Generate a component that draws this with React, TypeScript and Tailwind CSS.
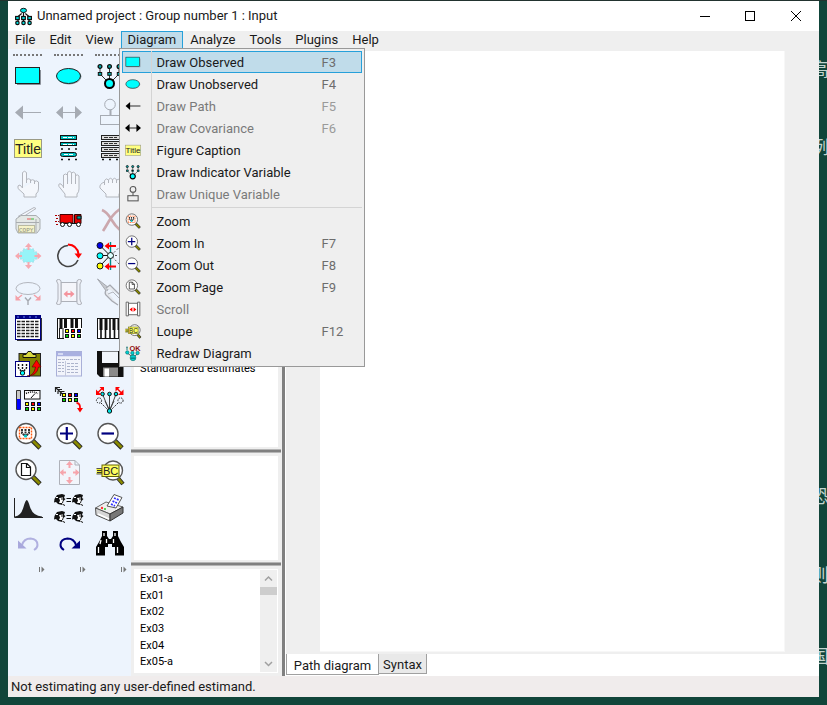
import React from 'react';

type IconProps = { className?: string };
type IconType = React.FC<IconProps>;

const Svg: React.FC<IconProps & { children: React.ReactNode }> = ({ className = 'w-7 h-7', children }) => (
    <svg viewBox="0 0 28 28" className={`${className} overflow-visible`} fill="none" aria-hidden="true">
        {children}
    </svg>
);

const ObservedIcon: IconType = (p) => (
    <Svg {...p}>
        <path d="M3 22.5H26.5V8" stroke="#8a9099" />
        <rect x="1.5" y="5.5" width="24" height="16" fill="#00ffff" stroke="#222" />
    </Svg>
);

const UnobservedIcon: IconType = (p) => (
    <Svg {...p}>
        <ellipse cx="14" cy="14.5" rx="12" ry="7.5" stroke="#8a9099" />
        <ellipse cx="13.5" cy="14" rx="12" ry="7.5" fill="#00ffff" stroke="#222" />
    </Svg>
);

const IndicatorIcon: IconType = (p) => (
    <Svg {...p}>
        <path d="M4 4V12L11 19M13.5 4V18M23 4V12L16 19" stroke="#333" />
        {[4, 13.5, 23].map((x) => (
            <g key={x} stroke="#111">
                <circle cx={x} cy="4.5" r="1.9" fill="#0aa" strokeWidth="1.3" />
                <rect x={x - 1.7} y="10.5" width="3.4" height="2.8" fill="#0aa" />
            </g>
        ))}
        <circle cx="13.5" cy="21.5" r="4.5" fill="#00ffff" stroke="#000" strokeWidth="2" />
    </Svg>
);

const PathIcon: IconType = (p) => (
    <Svg {...p}>
        <path d="M8 14.5H27" stroke="#a6abb3" />
        <path d="M1 14.5L9 7.5V21.5Z" fill="#a6abb3" />
    </Svg>
);

const CovarianceIcon: IconType = (p) => (
    <Svg {...p}>
        <path d="M7 14.5H20" stroke="#a6abb3" />
        <path d="M1 14.5L8 8V21ZM27 14.5L20 8V21Z" fill="#a6abb3" />
    </Svg>
);

const UniqueIcon: IconType = (p) => (
    <Svg {...p}>
        <g stroke="#a6abb3">
            <circle cx="14" cy="6.5" r="5.3" />
            <path d="M14.5 12V17" strokeWidth="2" />
            <rect x="4.5" y="17.5" width="20" height="9" />
        </g>
    </Svg>
);

const TitleIcon: IconType = (p) => (
    <Svg {...p}>
        <rect x="0.5" y="5.5" width="27" height="18" fill="#ffff80" stroke="#9a9a86" />
        <text x="1" y="20" fontSize="14" fill="#222" fontFamily="Liberation Sans, sans-serif">Title</text>
    </Svg>
);

const VariablesModelIcon: IconType = (p) => (
    <Svg {...p}>
        <g stroke="#111">
            <rect x="5.5" y="1.5" width="16" height="4" fill="#0bb" />
            <rect x="5.5" y="8.5" width="16" height="3" fill="#0bb" />
            <rect x="5.5" y="18.5" width="16" height="4" rx="2" fill="#0bb" />
            <path d="M8 3.5H19M8 10.5H19M9 20.5H18" stroke="#fff" strokeDasharray="4 1" />
            <path d="M6 15H22M6 25.5H22" strokeWidth="1.6" strokeDasharray="2 5" />
        </g>
    </Svg>
);

const VariablesDataIcon: IconType = (p) => (
    <Svg {...p}>
        {[1.5, 7.5, 13.5, 19.5].map((y) => (
            <g key={y}>
                <rect x="5.5" y={y} width="18" height="4" fill="#ddd" stroke="#222" />
                <path d={`M8 ${y + 2}H21`} stroke="#333" strokeDasharray="4 1" />
            </g>
        ))}
        <path d="M6 25.5H24" stroke="#111" strokeWidth="1.6" strokeDasharray="2 5" />
    </Svg>
);

const SelectOneIcon: IconType = (p) => (
    <Svg {...p}>
        <path
            d="M8.5 18V2.5Q10.5 0 12.5 2.5V11.5M12.5 13V9.5Q14.5 8 16.5 9.5V13M16.5 10.5Q18.5 9 20.5 10.5V14M20.5 11.5Q22.5 10 24.5 12V19Q24.5 22 22 24V27H10V24L4 18.5Q3 15 6 15L8.5 18"
            fill="#f4f7fc" stroke="#b3b6bd"
        />
    </Svg>
);

const SelectAllIcon: IconType = (p) => (
    <Svg {...p}>
        <path
            d="M8.5 18V5Q10.5 3 12.5 5V14M12.5 5V2.5Q14.5 0 16.5 2.5V14M16.5 3Q18.5 1 20.5 3.5V14M20.5 5.5Q22.5 4 24 6V19Q24 22 22 24V27H10V24L4 16.5Q3 13 6 14L8.5 17"
            fill="#f4f7fc" stroke="#b3b6bd"
        />
    </Svg>
);

const DeselectIcon: IconType = (p) => (
    <Svg {...p}>
        <path
            d="M8.5 15V10.5Q10.5 7.5 12.5 10V13M12.5 9.5Q14.5 7 16.5 9.5V13M16.5 9.5Q18.5 7 20.5 9.5V13M20.5 10Q23 8 25 11V19Q25 22 23 24V27H10V24L4 18Q3 14 8.5 12"
            fill="#f4f7fc" stroke="#b3b6bd"
        />
    </Svg>
);

const DuplicateIcon: IconType = (p) => (
    <Svg {...p}>
        <path d="M4 10.5L20 1.5L22 2.5L8 11.5" stroke="#b3b6bd" fill="#f4f7fc" />
        <path d="M2 13L7 9.5H22L26 13V23L23 27H4L2 23Z" fill="#e4e8e6" stroke="#a9adb0" />
        <path d="M2 16.5H25M22 13V26" stroke="#a9adb0" />
        <path d="M13 13H18" stroke="#e8a0a0" strokeWidth="2" />
        <path d="M17 13H20" stroke="#90d090" strokeWidth="2" />
        <rect x="4.5" y="19.5" width="16" height="7" fill="#f5f3c8" stroke="#b9b9a0" />
        <text x="5" y="26" fontSize="6" fill="#8f8f80" fontFamily="Liberation Mono, monospace">COPY</text>
    </Svg>
);

const TruckIcon: IconType = (p) => (
    <Svg {...p}>
        <path d="M0 9.5H4M1 12.5H4M0 15.5H4M1 18.5H4" stroke="#a00" strokeDasharray="2 1" />
        <path d="M5 8.5H18V17H5Z" fill="#f00000" stroke="#400" />
        <path d="M19.5 8.5H26V17.5H19.5Z" fill="#e00000" stroke="#300" />
        <path d="M22 10H26V13H22Z" fill="#00a0a0" stroke="#111" />
        <path d="M5 17.5H26" stroke="#111" />
        {[7.5, 14.5, 23.5].map((x) => (
            <circle key={x} cx={x} cy="18.5" r="2" fill="#fff" stroke="#111" />
        ))}
    </Svg>
);

const EraseIcon: IconType = (p) => (
    <Svg {...p}>
        <path d="M6 4Q11 6 15 13T25 25M24 3Q17 8 13 15T7 25" stroke="#cba7ad" strokeWidth="2.6" />
    </Svg>
);

const ShapeIcon: IconType = (p) => (
    <Svg {...p}>
        <path d="M9 7H20V10H23V17H20V20H9V17H6V10H9Z" fill="#96f4f8" stroke="#a5dfe8" strokeDasharray="2 1" />
        <path d="M14.5 1L18 5H15.5V8H13.5V5H11ZM14.5 27L18 23H15.5V20H13.5V23H11ZM1 14L5 10.5V13H8V15H5V17.5ZM27.5 14L23.5 10.5V13H20.5V15H23.5V17.5Z" fill="#f6a8b0" />
    </Svg>
);

const RotateIcon: IconType = (p) => (
    <Svg {...p}>
        <path d="M13 3.5A10.5 10.5 0 1 0 23 18" stroke="#444" strokeWidth="1.6" />
        <path d="M13 2.5Q22 3 23.5 12" stroke="#f00" strokeWidth="2" />
        <path d="M19.5 11.5H27L23.5 16.5Z" fill="#f00" />
    </Svg>
);

const ReflectIcon: IconType = (p) => (
    <Svg {...p}>
        <path d="M4 3.5L14 13.5L4 24M4 13.5H14" stroke="#111" />
        <path d="M25 3.5L15 13.5L25 24M15 13.5H25" stroke="#555" strokeDasharray="2 2" />
        <path d="M14.5 0V28" stroke="#088" strokeWidth="1.4" />
        <circle cx="4" cy="3.5" r="3" fill="#0000f0" stroke="#111" />
        <circle cx="4" cy="13.8" r="3" fill="#00ffff" stroke="#111" />
        <circle cx="4" cy="24" r="3" fill="#ffff00" stroke="#111" />
        <circle cx="14.5" cy="13.5" r="3" fill="#dff" stroke="#111" />
        <path d="M12 4H20M12 24.5H20" stroke="#f00" strokeWidth="2" />
        <path d="M8.5 4L13 0.5V7.5ZM8.5 24.5L13 21V28Z" fill="#f00" />
    </Svg>
);

const MoveParametersIcon: IconType = (p) => (
    <Svg {...p}>
        <ellipse cx="14" cy="10.5" rx="12" ry="6" stroke="#b3b6bd" />
        <path d="M11 19.5L14 23L17 19.5M14 23V27" stroke="#a6a9b0" strokeWidth="1.4" />
        <path d="M8 17L3 21M20 17L25 21" stroke="#f4a0a8" strokeWidth="1.5" />
        <path d="M1.5 17V22.5H7ZM26.5 17V22.5H21Z" fill="#f4a0a8" />
    </Svg>
);

const ScrollIcon: IconType = (p) => (
    <Svg {...p}>
        <path d="M6 4.5H22V23.5H6Z" fill="#f4f5fa" stroke="#aeb1b9" />
        <path d="M1.5 3Q1.5 1.5 3.5 1.5T6 3V25Q6 26.5 3.5 26.5T1.5 25Q3 23 3 21V6ZM26.5 3Q26.5 1.5 24.5 1.5T22 3V25Q22 26.5 24.5 26.5T26.5 25Q25 23 25 21V6Z" fill="#eef1f8" stroke="#aeb1b9" />
        <path d="M11 16H17" stroke="#f4939c" strokeWidth="2" />
        <path d="M8.5 16L12.5 12.5V19.5ZM19.5 16L15.5 12.5V19.5Z" fill="#f4939c" />
    </Svg>
);

const TouchUpIcon: IconType = (p) => (
    <Svg {...p}>
        <path d="M1.5 1L13 10L10.5 13.5Z" fill="#c5c8cd" stroke="#a6a9b0" />
        <path d="M10 10L14 7L24 17M10 12Q8 16 11 18L16 23L22 27" fill="#e6e9ee" stroke="#a6a9b0" strokeWidth="1.3" />
        <path d="M12 16L17 14L23 20" stroke="#b3b6bd" />
    </Svg>
);

const DataFilesIcon: IconType = (p) => (
    <Svg {...p}>
        <rect x="1.5" y="1.5" width="25" height="24" fill="#fff" stroke="#000080" />
        <path d="M1 3.5H27" stroke="#000080" strokeWidth="3" />
        <path d="M3 3H25" stroke="#6080ff" strokeDasharray="2 4" />
        <path d="M3 7.5H25M3 10.5H25M3 13.5H25M3 16.5H25M3 19.5H25M3 22.5H25" stroke="#222" strokeWidth="1.4" strokeDasharray="3.5 1" />
        <path d="M27.5 4V26.5H3" stroke="#333" />
    </Svg>
);

const Swatches: React.FC<{ x: number; y: number }> = ({ x, y }) => (
    <g>
        {['#ffff00', '#ff0000', '#0000ff', '#00d000', '#ffff00', '#00d000'].map((fill, i) => (
            <rect key={i} x={x + (i % 3) * 6 + 0.5} y={y + Math.floor(i / 3) * 5 + 0.5} width="3" height="3" fill={fill} stroke="#111" />
        ))}
    </g>
);

const AnalysisPropertiesIcon: IconType = (p) => (
    <Svg {...p}>
        <rect x="2.5" y="4.5" width="24" height="20" fill="#fff" stroke="#111" />
        <path d="M6 4V15M10.5 4V15M17 4V15M21.5 4V15" stroke="#111" strokeWidth="3" />
        <path d="M4.5 14V24M8 14V24" stroke="#222" />
        <rect x="9" y="14" width="18" height="11" fill="#fff" />
        <Swatches x={10} y={15} />
    </Svg>
);

const CalculateIcon: IconType = (p) => (
    <Svg {...p}>
        <rect x="1.5" y="4.5" width="26" height="20" fill="#fff" stroke="#111" />
        <path d="M5 4V16M10 4V16M18 4V16M23 4V16" stroke="#111" strokeWidth="3" />
        <path d="M5 16V24M9.5 16V24M14 4V24M18.5 16V24M23 16V24" stroke="#111" strokeWidth="1.6" />
    </Svg>
);

const ClipboardIcon: IconType = (p) => (
    <Svg {...p}>
        <rect x="5" y="3.5" width="21.5" height="22.5" fill="#808000" stroke="#222" />
        <path d="M9 7.5V4.5H12L14 1.5H17L19 4.5H22V7.5Z" fill="#d8d840" stroke="#111" />
        <rect x="1.5" y="11.5" width="14" height="15" fill="#fff" stroke="#000080" />
        <path d="M4.5 14V18L8 22M8.5 14V21M12.5 14V18L9 22" stroke="#111" strokeDasharray="2 1" strokeWidth="1.4" />
        <circle cx="8.5" cy="23" r="2.2" fill="#00ffff" stroke="#111" />
        <path d="M13 26Q20 26 21.5 17H18L22.5 10L27 17H24.5Q23 26 13 26Z" fill="#ff0000" stroke="#500" strokeWidth="0.6" />
    </Svg>
);

const ViewTextIcon: IconType = (p) => (
    <Svg {...p}>
        <rect x="1.5" y="1.5" width="25" height="24.5" fill="#f2f4fb" stroke="#a9b0d8" />
        <path d="M1 4H27" stroke="#a9b0e0" strokeWidth="4.5" />
        <path d="M3 4H8" stroke="#e4e8fa" strokeWidth="1.5" />
        <path d="M3 9.5H25M3 12.5H9M3 15.5H9M3 18.5H9M3 21.5H9M12 13.5H24M12 16.5H24M12 19.5H24M12 22.5H24" stroke="#adb4cc" strokeDasharray="3 1" />
        <path d="M10.5 11V26" stroke="#c4c9dc" />
    </Svg>
);

const SaveIcon: IconType = (p) => (
    <Svg {...p}>
        <path d="M1 1H27.5V27H4L1 24Z" fill="#111" />
        <rect x="6" y="1.5" width="16" height="11.5" fill="#f2f6fc" />
        <rect x="24" y="3" width="2" height="2" fill="#fff" />
        <rect x="7" y="17.5" width="15" height="9" fill="#8a8a8a" />
        <rect x="8.5" y="18.5" width="4.5" height="8" fill="#fff" />
    </Svg>
);

const ObjectPropertiesIcon: IconType = (p) => (
    <Svg {...p}>
        <path d="M2.5 4.5H6.5V23.5H2.5Z" fill="#c8c8c8" stroke="#333" />
        <path d="M3 13H6.5V23.5H3Z" fill="#0000ff" />
        <rect x="10.5" y="4.5" width="15.5" height="8.5" fill="#fff" stroke="#111" />
        <path d="M12 7.5Q18 4.5 24 7.5" stroke="#111" strokeDasharray="1 1" strokeWidth="1.5" />
        <path d="M17 12L21 7.5" stroke="#111" />
        <Swatches x={11} y={16} />
    </Svg>
);

const DragPropertiesIcon: IconType = (p) => (
    <Svg {...p}>
        <path d="M0.5 6V1.5H5M3 8V3.5H7M5.5 10V5.5H9.5M0.5 1.5L8 8.5" stroke="#222" strokeWidth="1.2" />
        <Swatches x={7} y={7} />
        <path d="M21.5 17Q25.5 17 25 23" stroke="#f00" strokeWidth="1.8" />
        <path d="M22 22H28L25 26.5Z" fill="#f00" />
    </Svg>
);

const PreserveSymmetriesIcon: IconType = (p) => (
    <Svg {...p}>
        <path d="M6.5 8L13 24M13.5 8V24M20 8L14 24M9 15L13.5 24M18 15L13.5 24" stroke="#444" />
        <g fill="#00e0e0" stroke="#111">
            <circle cx="6.5" cy="8" r="1.8" />
            <circle cx="13.5" cy="8" r="1.8" />
            <circle cx="20" cy="8" r="1.8" />
            <circle cx="13.5" cy="25" r="2.2" />
        </g>
        <g stroke="#222" strokeDasharray="1.5 1">
            <circle cx="3" cy="14.5" r="2.6" />
            <circle cx="24.5" cy="14.5" r="2.6" />
            <path d="M5 17L12 24M22 17L15 24" />
        </g>
        <path d="M1.5 7L6 2.5M25.5 7L21 2.5" stroke="#f00" strokeWidth="1.4" />
        <path d="M0 3.5V9H5.5ZM3.5 1H8V5.5ZM27.5 3.5V9H22ZM24 1H19.5V5.5Z" fill="#f00" />
    </Svg>
);

const Glass: React.FC<IconProps & { children: React.ReactNode }> = ({ children, className }) => (
    <Svg className={className}>
        <path d="M18 18L26 26" stroke="#222" strokeWidth="4.6" />
        <path d="M18.8 18.8L25.6 25.6" stroke="#8a8a00" strokeWidth="2.8" />
        <circle cx="12" cy="11.5" r="10" fill="#fff" stroke="#555" strokeWidth="1.4" />
        {children}
    </Svg>
);

const ZoomAreaIcon: IconType = (p) => (
    <Glass {...p}>
        <rect x="5.5" y="5.5" width="12" height="11" stroke="#ff5a10" strokeWidth="1.4" strokeDasharray="2 1" />
        <path d="M8 7V11L11 14M11.5 7V14M15 7V11L12 14" stroke="#333" strokeWidth="2" strokeDasharray="2 0.6" />
        <circle cx="11.5" cy="14" r="1.6" fill="#0cc" />
    </Glass>
);

const ZoomInIcon: IconType = (p) => (
    <Glass {...p}>
        <path d="M5 11.5H18M11.8 5V18" stroke="#000080" strokeWidth="2.2" />
    </Glass>
);

const ZoomOutIcon: IconType = (p) => (
    <Glass {...p}>
        <path d="M5.5 11.5H18" stroke="#000080" strokeWidth="2.2" />
    </Glass>
);

const ZoomPageIcon: IconType = (p) => (
    <Glass {...p}>
        <path d="M7.5 5.5H13L16.5 9V17.5H7.5ZM12.5 5.5V9.5H16.5" stroke="#111" strokeWidth="1.2" />
    </Glass>
);

const ResizePageIcon: IconType = (p) => (
    <Svg {...p}>
        <path d="M4.5 2.5H20L24.5 7V26.5H4.5ZM20 2.5V7H24.5" fill="#f2f5fb" stroke="#aeb1b9" />
        <path d="M14.5 3L18 7H15.5V10H13.5V7H11ZM14.5 26L18 22H15.5V19H13.5V22H11ZM4.5 14.5L8.5 11V13.5H11V15.5H8.5V18ZM24.5 14.5L20.5 11V13.5H18V15.5H20.5V18Z" fill="#f6a5ac" />
    </Svg>
);

const LoupeIcon: IconType = (p) => (
    <Svg {...p}>
        <path d="M21 19L27 26" stroke="#222" strokeWidth="4.2" />
        <path d="M21.5 19.6L26.5 25.5" stroke="#8a8a00" strokeWidth="2.6" />
        <circle cx="17" cy="12.5" r="9.5" fill="#fff" stroke="#555" strokeWidth="1.4" />
        <path d="M0.5 10.5H6V16H0.5" fill="#f4f430" stroke="#555" />
        <path d="M1 12.5H6M1 14.5H6" stroke="#333" />
        <rect x="6" y="7" width="17" height="11.5" fill="#ffff60" stroke="#666600" />
        <text x="7" y="17" fontSize="11" fill="#222" fontFamily="Liberation Sans, sans-serif">BC</text>
    </Svg>
);

const BayesianIcon: IconType = (p) => (
    <Svg {...p}>
        <path d="M1 22.5Q7 22 9.5 13Q11.5 6 12.8 6Q14 6 16 13Q19 22 28 22.5V23H1Z" fill="#222" />
        <path d="M0.5 4V23.5H29" stroke="#222" />
    </Svg>
);

const Face: React.FC<{ x: number; y: number }> = ({ x, y }) => (
    <g transform={`translate(${x} ${y})`}>
        <path d="M0.5 5L3 1L8 0L11 1L10 4L11.5 5L9.5 7L8.5 11L4 10L2 8L0 8.5Z" fill="#111" />
        <path d="M5 4L9 3.5V6L8 9H5L6 6.5Z" fill="#fff" />
        <path d="M2 3.5H4M8 9.5L10.5 10.5" stroke="#fff" />
        <path d="M7 5H9M9 10.5L11 11.5" stroke="#111" />
    </g>
);

const MultipleGroupIcon: IconType = (p) => (
    <Svg {...p}>
        <Face x={-1} y={0} />
        <Face x={17} y={0} />
        <Face x={-1} y={17} />
        <Face x={17} y={17} />
        <path d="M11.5 4.5H16M11.5 7.5H16M11.5 21.5H16M11.5 24.5H16" stroke="#111" strokeWidth="1.2" />
    </Svg>
);

const PrintIcon: IconType = (p) => (
    <Svg {...p}>
        <path d="M-0.5 14L10 8L27 13L14 20Z" fill="#eee" stroke="#666" />
        <path d="M-0.5 14L14 20V27L0 21Z" fill="#d5d5d5" stroke="#555" />
        <path d="M14 20L27 13V19L14 27Z" fill="#777" stroke="#333" />
        <path d="M11 12L18 0.5L26 3.5L20 14Z" fill="#fff" stroke="#555" />
        <path d="M18 4L23 6M16.5 7L21 9M15 10L19 12" stroke="#3030ff" strokeWidth="1.8" strokeDasharray="2 1" />
        <path d="M2 20L13 25" stroke="#fff" strokeWidth="1.4" />
        <circle cx="6" cy="14" r="1.2" fill="#f33" />
        <circle cx="9" cy="15" r="1" fill="#2c2" />
    </Svg>
);

const UndoIcon: IconType = (p) => (
    <Svg {...p}>
        <path d="M8 15Q10 8.5 16.5 8.5Q23.5 9 23.5 15Q23.5 18 20 20" stroke="#b0b0e0" strokeWidth="2" />
        <path d="M4 10.5V18.5H12.5Z" fill="#a8a8dc" />
    </Svg>
);

const RedoIcon: IconType = (p) => (
    <Svg {...p}>
        <path d="M21 15Q19 8.5 12.5 8.5Q5.5 9 5.5 15Q5.5 18 9 20" stroke="#000080" strokeWidth="2" />
        <path d="M25 10.5V18.5H16.5Z" fill="#000080" />
    </Svg>
);

const SearchIcon: IconType = (p) => (
    <Svg {...p}>
        <path d="M6 1H11V6L13 9H15L17 6V1H22V6L25 12L28 17V25.5H19V17H16V14H12V17H9V25.5H0V17L3 12L6 6Z" fill="#000" />
        <path d="M8 3V6M19 3V6M2.5 17V23M10.5 9V13M17.5 9V13M21.5 17V23M5 10L4 14" stroke="#fff" strokeWidth="1.3" />
    </Svg>
);

const SmallPathIcon: IconType = (p) => (
    <Svg {...p}>
        <path d="M8 14H27" stroke="#333" strokeWidth="1.8" />
        <path d="M1 14L9 7V21Z" fill="#000" />
    </Svg>
);

const SmallCovarianceIcon: IconType = (p) => (
    <Svg {...p}>
        <path d="M7 14H21" stroke="#333" strokeWidth="1.8" />
        <path d="M0 14L8 7V21ZM28 14L20 7V21Z" fill="#000" />
    </Svg>
);

const SmallUniqueIcon: IconType = (p) => (
    <Svg {...p}>
        <g stroke="#555" strokeWidth="1.8">
            <circle cx="14" cy="6" r="5" />
            <path d="M14 11V17" />
            <rect x="5" y="17" width="18" height="9" />
        </g>
    </Svg>
);

const SmallScrollIcon: IconType = (p) => (
    <Svg {...p}>
        <path d="M6 4H22V24H6Z" fill="#fff" stroke="#555" strokeWidth="1.5" />
        <path d="M2 2H6V26H2ZM22 2H26V26H22Z" fill="#fff" stroke="#555" strokeWidth="1.5" />
        <path d="M8 15L13 11V19ZM20 15L15 11V19Z" fill="#f00" />
    </Svg>
);

const RedrawIcon: IconType = (p) => (
    <Svg {...p}>
        <path d="M4 14L12 20M14 13V20M24 14L16 20" stroke="#444" strokeWidth="1.5" />
        <g fill="#00d0d0" stroke="#066">
            <circle cx="4" cy="13" r="3" />
            <circle cx="13" cy="14" r="3" />
            <circle cx="22" cy="14" r="3" />
            <circle cx="14" cy="22.5" r="5" />
        </g>
        <path d="M10 23H18" stroke="#055" strokeWidth="1.5" />
        <path d="M2 4H5M2 7H5" stroke="#066" strokeWidth="2" />
        <text x="8" y="10" fontSize="13" fontWeight="bold" fill="#901010" fontFamily="Liberation Sans, sans-serif">OK</text>
    </Svg>
);

const AppIcon: IconType = (p) => (
    <Svg {...p}>
        <path d="M14 7V24M11 9L5 14V24M17 9L23 14V24" stroke="#111" strokeWidth="2" />
        <ellipse cx="14" cy="4" rx="5" ry="3.5" fill="#00e0e0" stroke="#111" strokeWidth="1.6" />
        {[4, 14, 24].map((x) => (
            <g key={x} fill="#00e0e0" stroke="#111" strokeWidth="2">
                <rect x={x - 3} y="14" width="6" height="5" />
                <circle cx={x} cy="24.5" r="2.8" />
            </g>
        ))}
    </Svg>
);

const tools: { label: string; Icon: IconType; disabled?: boolean }[] = [
    { label: 'Draw observed', Icon: ObservedIcon },
    { label: 'Draw unobserved', Icon: UnobservedIcon },
    { label: 'Draw indicator', Icon: IndicatorIcon },
    { label: 'Draw path', Icon: PathIcon, disabled: true },
    { label: 'Draw covariance', Icon: CovarianceIcon, disabled: true },
    { label: 'Draw unique', Icon: UniqueIcon, disabled: true },
    { label: 'Figure caption', Icon: TitleIcon },
    { label: 'Variables in model', Icon: VariablesModelIcon },
    { label: 'Variables in dataset', Icon: VariablesDataIcon },
    { label: 'Select one', Icon: SelectOneIcon, disabled: true },
    { label: 'Select all', Icon: SelectAllIcon, disabled: true },
    { label: 'Deselect all', Icon: DeselectIcon, disabled: true },
    { label: 'Duplicate', Icon: DuplicateIcon, disabled: true },
    { label: 'Move', Icon: TruckIcon },
    { label: 'Erase', Icon: EraseIcon, disabled: true },
    { label: 'Shape', Icon: ShapeIcon, disabled: true },
    { label: 'Rotate', Icon: RotateIcon },
    { label: 'Reflect', Icon: ReflectIcon },
    { label: 'Move parameters', Icon: MoveParametersIcon, disabled: true },
    { label: 'Scroll', Icon: ScrollIcon, disabled: true },
    { label: 'Touch up', Icon: TouchUpIcon, disabled: true },
    { label: 'Data files', Icon: DataFilesIcon },
    { label: 'Analysis properties', Icon: AnalysisPropertiesIcon },
    { label: 'Calculate', Icon: CalculateIcon },
    { label: 'Copy to clipboard', Icon: ClipboardIcon },
    { label: 'View text', Icon: ViewTextIcon, disabled: true },
    { label: 'Save', Icon: SaveIcon },
    { label: 'Object properties', Icon: ObjectPropertiesIcon },
    { label: 'Drag properties', Icon: DragPropertiesIcon },
    { label: 'Preserve symmetries', Icon: PreserveSymmetriesIcon },
    { label: 'Zoom', Icon: ZoomAreaIcon },
    { label: 'Zoom in', Icon: ZoomInIcon },
    { label: 'Zoom out', Icon: ZoomOutIcon },
    { label: 'Zoom page', Icon: ZoomPageIcon },
    { label: 'Resize page', Icon: ResizePageIcon, disabled: true },
    { label: 'Loupe', Icon: LoupeIcon },
    { label: 'Bayesian', Icon: BayesianIcon },
    { label: 'Multiple group', Icon: MultipleGroupIcon },
    { label: 'Print', Icon: PrintIcon },
    { label: 'Undo', Icon: UndoIcon, disabled: true },
    { label: 'Redo', Icon: RedoIcon },
    { label: 'Search', Icon: SearchIcon },
];

const menus = ['File', 'Edit', 'View', 'Diagram', 'Analyze', 'Tools', 'Plugins', 'Help'];

interface MenuEntry {
    label: string;
    Icon: IconType;
    hotkey?: string;
    disabled?: boolean;
    active?: boolean;
}

const drawEntries: MenuEntry[] = [
    { label: 'Draw Observed', Icon: ObservedIcon, hotkey: 'F3', active: true },
    { label: 'Draw Unobserved', Icon: UnobservedIcon, hotkey: 'F4' },
    { label: 'Draw Path', Icon: SmallPathIcon, hotkey: 'F5', disabled: true },
    { label: 'Draw Covariance', Icon: SmallCovarianceIcon, hotkey: 'F6', disabled: true },
    { label: 'Figure Caption', Icon: TitleIcon },
    { label: 'Draw Indicator Variable', Icon: IndicatorIcon },
    { label: 'Draw Unique Variable', Icon: SmallUniqueIcon, disabled: true },
];

const viewEntries: MenuEntry[] = [
    { label: 'Zoom', Icon: ZoomAreaIcon },
    { label: 'Zoom In', Icon: ZoomInIcon, hotkey: 'F7' },
    { label: 'Zoom Out', Icon: ZoomOutIcon, hotkey: 'F8' },
    { label: 'Zoom Page', Icon: ZoomPageIcon, hotkey: 'F9' },
    { label: 'Scroll', Icon: SmallScrollIcon, disabled: true },
    { label: 'Loupe', Icon: LoupeIcon, hotkey: 'F12' },
    { label: 'Redraw Diagram', Icon: RedrawIcon },
];

const MenuRow: React.FC<{ entry: MenuEntry }> = ({ entry }) => {
    const { label, Icon, hotkey, disabled, active } = entry;
    return (
        <button
            role="menuitem"
            disabled={disabled}
            className={`flex h-[22px] w-full text-left leading-6 ${active ? 'bg-[#c0dcea] ring-1 ring-[#26a0da] ring-inset' : ''} ${disabled ? 'text-[#7a7a7a]' : 'text-[#1a1a1a]'}`}
        >
            <span className="flex w-[29px] items-center self-stretch pl-[3px]"><Icon className="h-4 w-4" /></span>
            <span className="flex-1 border-l border-[#d4d4d4] pl-[5px]">{label}</span>
            <span className={`w-10 ${disabled ? 'text-[#9a9a9a]' : 'text-[#6d6d6d]'}`}>{hotkey}</span>
        </button>
    );
};

const DiagramMenu: React.FC = () => (
    <div role="menu" className="absolute top-[17px] -left-0.5 z-10 w-[246px] border border-[#999] bg-[#efefef] p-[2px]">
        {drawEntries.map((entry) => <MenuRow key={entry.label} entry={entry} />)}
        <div className="ml-[29px] h-[5px] border-l border-[#d4d4d4] py-[2px]">
            <div className="h-px bg-[#d4d4d4]" />
        </div>
        {viewEntries.map((entry) => <MenuRow key={entry.label} entry={entry} />)}
    </div>
);

const TitleBar: React.FC = () => (
    <header className="flex h-[30px] items-center bg-white pl-[7px]">
        <AppIcon className="h-[17px] w-[17px]" />
        <h1 className="flex-1 pl-[5px]">Unnamed project : Group number 1 : Input</h1>
        <button aria-label="Minimize" className="flex h-full w-11 items-center justify-center">
            <span className="h-px w-[10px] bg-black" />
        </button>
        <button aria-label="Maximize" className="flex h-full w-[46px] items-center justify-center">
            <span className="h-[10px] w-[10px] border border-black" />
        </button>
        <button aria-label="Close" className="flex h-full w-[46px] items-center justify-center">
            <svg viewBox="0 0 10 10" className="h-[10px] w-[10px]" stroke="#000" aria-hidden="true">
                <path d="M0 0L10 10M10 0L0 10" />
            </svg>
        </button>
    </header>
);

const MenuBar: React.FC = () => (
    <nav className="flex h-[18px] bg-[#efefef]">
        {menus.map((name) => (
            <div key={name} className="relative">
                <button
                    className={`flex h-[17px] items-center border-x border-t px-[6px] ${name === 'Diagram' ? 'border-[#26a0da] bg-[#c0dcea]' : 'border-transparent'}`}
                >
                    {name}
                </button>
                {name === 'Diagram' && <DiagramMenu />}
            </div>
        ))}
    </nav>
);

const ToolBox: React.FC = () => (
    <aside className="w-[123px] shrink-0 bg-[#edf4fd]">
        <div className="grid h-[9px] grid-cols-3 pt-[5px]">
            {[0, 1, 2].map((i) => (
                <div key={i} className="ml-[5px] h-0 w-[29px] border-t-2 border-dotted border-[#777]" />
            ))}
        </div>
        <div className="grid grid-cols-3">
            {tools.map(({ label, Icon, disabled }) => (
                <button key={label} aria-label={label} disabled={disabled} className="flex h-9 items-center pl-[6px]">
                    <Icon />
                </button>
            ))}
        </div>
        <div className="grid grid-cols-3 pt-1">
            {[0, 1, 2].map((i) => (
                <svg key={i} viewBox="0 0 7 7" className="ml-[30px] h-[7px] w-[7px]" aria-hidden="true">
                    <path d="M1.5 1V6" stroke="#777" />
                    <path d="M3.5 0.5L6.5 3.5L3.5 6.5Z" fill="#777" />
                </svg>
            ))}
        </div>
    </aside>
);

const examples = ['Ex01-a', 'Ex01', 'Ex02', 'Ex03', 'Ex04', 'Ex05-a'];

const Divider: React.FC = () => (
    <div className="mr-px h-1 border-y border-[#b5b5b5] bg-[#808080]" />
);

const SidePanels: React.FC = () => (
    <section className="flex w-[151px] shrink-0 flex-col bg-[#efefef] text-[11px] text-black">
        <div className="mr-1 mb-[2px] ml-[3px] flex-1 bg-white pt-[312px] pl-[6px] leading-4">Standardized estimates</div>
        <Divider />
        <div className="mt-[3px] mr-1 mb-[2px] ml-[3px] h-[104px] bg-white" />
        <Divider />
        <div className="mt-[3px] mr-1 mb-[3px] ml-[3px] flex h-[104px] bg-white">
            <ul className="grid h-[102px] flex-1 grid-rows-6 pt-[2px] pl-[6px] leading-4">
                {examples.map((name) => (
                    <li key={name}>{name}</li>
                ))}
            </ul>
            <div className="my-px mr-px flex w-[17px] flex-col items-center bg-[#efefef]">
                <svg viewBox="0 0 17 17" className="h-[17px] w-[17px]" fill="none" stroke="#a0a0a0" strokeWidth="1.5" aria-hidden="true">
                    <path d="M5 10.5L8.5 7L12 10.5" />
                </svg>
                <div className="h-2 w-full bg-[#cdcdcd]" />
                <div className="flex-1" />
                <svg viewBox="0 0 17 17" className="h-[17px] w-[17px]" fill="none" stroke="#a0a0a0" strokeWidth="1.5" aria-hidden="true">
                    <path d="M5 7L8.5 10.5L12 7" />
                </svg>
            </div>
        </div>
    </section>
);

const DrawingArea: React.FC = () => (
    <main className="flex flex-1 flex-col border-l border-white bg-[#efefef]">
        <div className="mt-[2px] mr-[34px] ml-[34px] flex-1 border-r border-b border-[#f7f7f7] bg-white" />
        <div className="h-[2px]" />
        <div role="tablist" className="flex h-[22px] items-start bg-white">
            <button role="tab" aria-selected="true" className="h-[21px] w-[93px] border-r border-b border-l border-[#a0a0a0] bg-white pt-[2px]">
                Path diagram
            </button>
            <button role="tab" aria-selected="false" className="h-5 w-[48px] border-r border-b border-[#a0a0a0] bg-[#e9e9e9] pt-px">
                Syntax
            </button>
        </div>
    </main>
);

// right hand pieces of the desktop labels that stick out behind the window
const desktopLabels = [
    { text: '高', top: 'top-[58px]' },
    { text: '例', top: 'top-[136px]' },
    { text: '恐', top: 'top-[485px]' },
    { text: '则', top: 'top-[564px]' },
    { text: '国', top: 'top-[645px]' },
];

const App: React.FC = () => (
    <div className="relative flex min-h-screen flex-col overflow-hidden bg-[#11453a] pt-px pr-2 pb-2 pl-2 font-['Roboto','Noto_Sans_CJK_SC',sans-serif] text-[13px] text-[#1a1a1a]">
        <div className="absolute inset-x-0 top-0 h-px bg-[#22332f]" />
        <div className="absolute inset-y-0 right-0 w-2 overflow-hidden text-[18px] leading-6 text-[#c4d4cf]">
            {desktopLabels.map(({ text, top }) => (
                <span key={text} className={`absolute -left-2 ${top}`}>{text}</span>
            ))}
        </div>
        <div className="relative flex flex-1 flex-col">
            <TitleBar />
            <MenuBar />
            <div className="flex flex-1">
                <ToolBox />
                <SidePanels />
                <div className="w-[3px] bg-[#808080]" />
                <DrawingArea />
            </div>
            <footer className="flex h-[21px] items-center bg-[#f0ecec] pl-[3px]">
                Not estimating any user-defined estimand.
            </footer>
        </div>
    </div>
);

export default App;
